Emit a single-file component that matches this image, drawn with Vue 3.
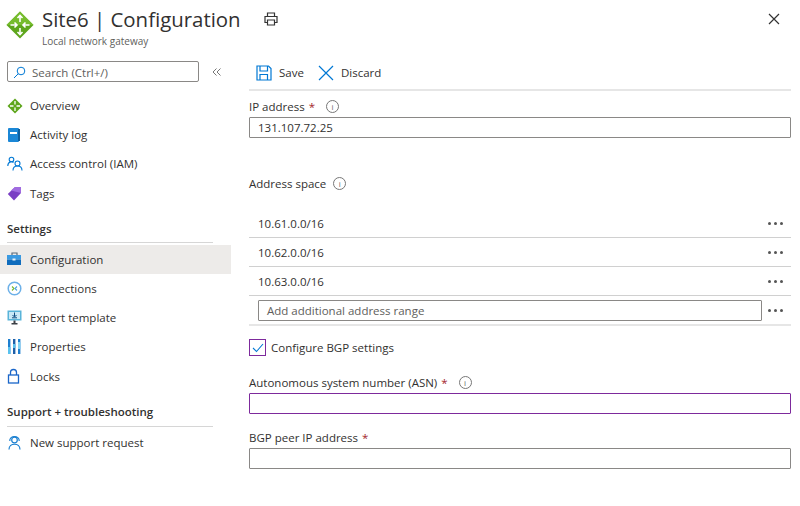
<script setup>
const generalItems = [
  { label: 'Overview', icon: 'overview' },
  { label: 'Activity log', icon: 'log' },
  { label: 'Access control (IAM)', icon: 'iam' },
  { label: 'Tags', icon: 'tag' },
]
const settingsItems = [
  { label: 'Configuration', icon: 'config', active: true },
  { label: 'Connections', icon: 'conn' },
  { label: 'Export template', icon: 'export' },
  { label: 'Properties', icon: 'props' },
  { label: 'Locks', icon: 'lock' },
]
const ranges = ['10.61.0.0/16', '10.62.0.0/16', '10.63.0.0/16']
</script>

<template>
  <div class="page">
    <header class="header">
      <svg class="logo" width="28" height="28" viewBox="0 0 28 28">
        <path d="M14 .5 27.500 14 14 27.500 .5 14z" fill="#5ea61c" />
        <path d="M14 .5 27.500 14H.5z" fill="#76bc2d" />
        <g fill="none" stroke="#fff" stroke-width="1.600">
          <path d="M14 4.500v6.500M11.500 7 14 4.500 16.500 7" />
          <path d="M14 23.500V17M11.500 21l2.500 2.500 2.500-2.500" />
          <path d="M4.500 14H11M8.500 11.500 11 14l-2.500 2.500" />
          <path d="M23.500 14H17M19.500 11.500 17 14l2.500 2.500" />
        </g>
      </svg>
      <div class="titles">
        <h1><b>Site6</b> | Configuration</h1>
        <p>Local network gateway</p>
      </div>
      <svg class="print" width="14" height="14" viewBox="0 0 14 14" fill="none" stroke="#333" stroke-width="1.200">
        <path d="M3.500 4.500V1h7v3.500M3.500 10.500H1v-6h12v6h-2.500" />
        <path d="M3.500 8h7v5h-7z" />
      </svg>
      <svg class="close" width="12" height="12" viewBox="0 0 12 12" stroke="#333" stroke-width="1.200">
        <path d="M1 1l10 10M11 1 1 11" />
      </svg>
    </header>

    <div class="body">
      <aside class="sidebar">
        <div class="search-row">
          <div class="search">
            <svg width="13" height="13" viewBox="0 0 13 13" fill="none" stroke="#0078d4" stroke-width="1">
              <circle cx="8" cy="5" r="3.800" />
              <path d="M5.200 7.800 1 12" />
            </svg>
            <span>Search (Ctrl+/)</span>
          </div>
          <svg class="collapse" width="9" height="8" viewBox="0 0 9 8" fill="none" stroke="#777" stroke-width="1">
            <path d="M4.500.5 1 4l3.500 3.500M8.500.5 5 4l3.500 3.500" />
          </svg>
        </div>

        <nav class="group first">
          <a v-for="item in generalItems" :key="item.label" class="nav-item">
            <span class="nav-icon">
              <svg v-if="item.icon === 'overview'" width="16" height="16" viewBox="0 0 16 16">
                <path d="M8 .5 15.500 8 8 15.500 .5 8z" fill="#5ea61c" />
                <path d="M8 3v3.500M8 13V9.500M3 8h3.500M13 8H9.500" stroke="#fff" stroke-width="1.300" />
              </svg>
              <svg v-else-if="item.icon === 'log'" width="14" height="16" viewBox="0 0 14 16">
                <rect x="1" y="1" width="11" height="14" rx="1" fill="#1b87d6" />
                <rect x="11" y="2" width="2" height="12" fill="#0f5f9e" />
                <rect x="3" y="5" width="7" height="2" fill="#fff" />
              </svg>
              <svg v-else-if="item.icon === 'iam'" width="16" height="16" viewBox="0 0 16 16" fill="none" stroke="#0078d4" stroke-width="1.100">
                <circle cx="4.500" cy="3.500" r="2.300" />
                <path d="M.8 10c0-5 4.700-4.500 5.700-3.500" />
                <circle cx="10.500" cy="7.500" r="2.500" />
                <path d="M6 14.500c0-6 9-6 9 0" />
              </svg>
              <svg v-else width="15" height="15" viewBox="0 0 15 15">
                <path d="M8 1h6v6l-7 7.500L.8 8z" fill="#7a3fc4" />
                <path d="M8 1h6v6L4 4.500z" fill="#a06be0" />
              </svg>
            </span>
            {{ item.label }}
          </a>
        </nav>

        <h2 class="group-title">Settings</h2>
        <nav class="group">
          <a v-for="item in settingsItems" :key="item.label" class="nav-item" :class="{ active: item.active }">
            <span class="nav-icon">
              <svg v-if="item.icon === 'config'" width="15" height="14" viewBox="0 0 15 14">
                <path d="M5 3V1h5v2" fill="none" stroke="#5a6b7b" stroke-width="1.200" />
                <rect y="3" width="14" height="4.500" fill="#3b9ae1" />
                <rect y="7.500" width="14" height="5.500" fill="#0f6cbd" />
                <rect x="5.500" y="6.500" width="3" height="2" fill="#e8f3fb" />
              </svg>
              <svg v-else-if="item.icon === 'conn'" width="15" height="15" viewBox="0 0 15 15" fill="none">
                <circle cx="7.500" cy="7.500" r="6.300" stroke="#6cb0e8" stroke-width="1.500" />
                <path d="M5 5.500 7 7.500 5 9.500" stroke="#78b82a" stroke-width="1.100" />
                <path d="M10 5.500 8 7.500 10 9.500" stroke="#4aa3e0" stroke-width="1.100" />
              </svg>
              <svg v-else-if="item.icon === 'export'" width="15" height="15" viewBox="0 0 15 15">
                <rect x=".5" y=".5" width="14" height="10" fill="#59b4d9" />
                <rect x="2" y="2" width="11" height="7" fill="#c9e8f6" />
                <path d="M7.500 2.500v4M5.500 5l2 2 2-2M5 7.800h5" stroke="#0f4c81" stroke-width="1" fill="none" />
                <path d="M6.500 10.500h2V13h-2zM4.500 13h6v1.500h-6z" fill="#3b3f46" />
              </svg>
              <svg v-else-if="item.icon === 'props'" width="14" height="15" viewBox="0 0 14 15">
                <rect x="1" y="0" width="2.400" height="15" fill="#1e7fd0" />
                <rect x="1" y="8" width="2.400" height="7" fill="#59c2ef" />
                <rect x="6" y="0" width="2.400" height="15" fill="#1e5fa8" />
                <rect x="6" y="5" width="2.400" height="4" fill="#59c2ef" />
                <rect x="11" y="0" width="2.400" height="15" fill="#1e7fd0" />
                <rect x="11" y="3" width="2.400" height="7" fill="#7fd3f4" />
              </svg>
              <svg v-else width="13" height="16" viewBox="0 0 13 16" fill="none" stroke="#1a66c9" stroke-width="1.300">
                <rect x="1.500" y="7" width="10" height="8" />
                <path d="M3.500 7V4.500a3 3 0 0 1 6 0V7" />
              </svg>
            </span>
            {{ item.label }}
          </a>
        </nav>

        <h2 class="group-title support">Support + troubleshooting</h2>
        <nav class="group">
          <a class="nav-item">
            <span class="nav-icon">
              <svg width="15" height="15" viewBox="0 0 15 15" fill="none" stroke="#1a7fd0" stroke-width="1.200">
                <circle cx="7.500" cy="5" r="2.800" />
                <path d="M2.800 6c-.6-6 9.900-6 9.400 0M2 14.500c0-7 11-7 11 0" />
              </svg>
            </span>
            New support request
          </a>
        </nav>
      </aside>

      <main class="main">
        <div class="toolbar">
          <button class="tool">
            <svg width="16" height="16" viewBox="0 0 16 16" fill="none" stroke="#0078d4" stroke-width="1.200">
              <path d="M1 1h11.500L15 3.500V15H1z" />
              <path d="M4 1v5h7.500V1M4 15V9.500h7.500V15" />
            </svg>
            Save
          </button>
          <button class="tool">
            <svg width="16" height="16" viewBox="0 0 16 16" stroke="#0078d4" stroke-width="1.200">
              <path d="M1 1l14 14M15 1 1 15" />
            </svg>
            Discard
          </button>
        </div>

        <label class="field-label ip-label">IP address <em>*</em> <i class="info">i</i></label>
        <div class="input">131.107.72.25</div>

        <label class="field-label space-label">Address space <i class="info">i</i></label>
        <div class="ranges">
          <div v-for="range in ranges" :key="range" class="range">
            <span>{{ range }}</span>
            <span class="dots"><i></i><i></i><i></i></span>
          </div>
          <div class="range add">
            <div class="input add-input">Add additional address range</div>
            <span class="dots"><i></i><i></i><i></i></span>
          </div>
        </div>

        <div class="check-row">
          <span class="checkbox">
            <svg width="12" height="10" viewBox="0 0 12 10" fill="none" stroke="#0078d4" stroke-width="1.100">
              <path d="M1 5l3.500 3.500L11 1" />
            </svg>
          </span>
          Configure BGP settings
        </div>

        <label class="field-label asn-label">Autonomous system number (ASN) <em>*</em> <i class="info">i</i></label>
        <div class="input focused"></div>

        <label class="field-label peer-label">BGP peer IP address <em>*</em></label>
        <div class="input"></div>
      </main>
    </div>
  </div>
</template>

<style scoped>
.page {
  width: 800px;
  height: 506px;
  overflow: hidden;
  background: #fff;
  color: #323130;
  font-family: "Open Sans", "Noto Sans", sans-serif;
  font-size: 11.500px;
}

.header {
  display: flex;
  height: 56px;
  padding: 5px 20px 0 6px;
  box-sizing: border-box;
}
.logo {
  margin: 6px 8px 0 0;
}
.titles h1 {
  margin: 0;
  font-size: 20.400px;
  font-weight: 400;
  line-height: 28px;
  white-space: nowrap;
}
.titles h1 b {
  font-weight: 500;
}
.titles p {
  margin: 2px 0 0;
  font-size: 10px;
  line-height: 12px;
  color: #605e5c;
}
.print {
  margin: 7px 0 0 23px;
}
.close {
  margin: 8px 0 0 auto;
}

.body {
  display: flex;
}
.sidebar {
  width: 231px;
  flex: none;
}
.search-row {
  display: flex;
  align-items: center;
  padding: 5px 0 0 7px;
}
.search {
  display: flex;
  align-items: center;
  gap: 6px;
  width: 192px;
  height: 21px;
  padding: 1px 0 0 5px;
  box-sizing: border-box;
  border: 1px solid #8a8886;
  border-radius: 2px;
  color: #605e5c;
}
.collapse {
  margin-left: 13px;
}
.group.first {
  margin-top: 9px;
}
.nav-item {
  display: flex;
  align-items: center;
  height: 29.200px;
  padding-left: 7px;
  white-space: nowrap;
}
.nav-item.active {
  background: #edebe9;
}
.nav-icon {
  display: flex;
  align-items: center;
  width: 23px;
}
.group-title {
  margin: 12px 18px 2px 7px;
  height: 22px;
  border-bottom: 1px solid #d6d6d6;
  font-size: 11.500px;
  font-weight: 600;
  line-height: 17px;
}
.group-title.support {
  margin: 12px 18px 1px 7px;
  height: 23px;
}

.main {
  flex: 1;
  padding: 0 9px 0 18px;
  min-width: 0;
}
.toolbar {
  display: flex;
  gap: 14px;
  height: 33px;
  margin-bottom: 8px;
  padding-left: 7px;
  border-bottom: 2px solid #e6e6e6;
}
.tool {
  display: flex;
  align-items: center;
  gap: 7px;
  height: 31px;
  padding: 2px 0 0;
  border: 0;
  background: none;
  font: inherit;
  color: inherit;
}

.field-label {
  display: block;
  height: 16px;
  line-height: 16px;
}
.field-label em {
  color: #a4262c;
  font-style: normal;
  margin: 0 4px 0 1px;
}
.info {
  display: inline-block;
  width: 11px;
  height: 11px;
  margin-left: 4px;
  border: 1px solid #777;
  border-radius: 50%;
  font-size: 8px;
  line-height: 11px;
  font-style: normal;
  text-align: center;
  color: #666;
  vertical-align: 1px;
}
.ip-label {
  margin-bottom: 2px;
}
.input {
  height: 21px;
  padding-left: 8px;
  box-sizing: border-box;
  border: 1px solid #8a8886;
  border-radius: 1px;
  line-height: 19px;
}
.input.focused {
  border-color: #7d2a9c;
}
.space-label {
  margin-top: 38px;
}
.ranges {
  margin-top: 17px;
}
.range {
  display: flex;
  align-items: center;
  justify-content: space-between;
  height: 28px;
  padding-left: 9px;
  border-bottom: 1px solid #d0d0d0;
}
.range.add {
  padding-left: 9px;
  border-bottom: 2px solid #e6e6e6;
}
.add-input {
  flex: 1;
  height: 21px;
  color: #605e5c;
}
.dots {
  display: flex;
  gap: 3px;
  width: 29px;
  flex: none;
  padding-left: 6px;
  box-sizing: border-box;
}
.dots i {
  width: 3px;
  height: 3px;
  border-radius: 50%;
  background: #555;
}
.check-row {
  display: flex;
  align-items: center;
  gap: 5px;
  margin-top: 13px;
}
.checkbox {
  display: flex;
  align-items: center;
  justify-content: center;
  width: 15px;
  height: 15px;
  border: 1px solid #7d2a9c;
}
.asn-label {
  margin-top: 19px;
  margin-bottom: 2px;
}
.peer-label {
  margin-top: 16px;
  margin-bottom: 2px;
}
</style>
